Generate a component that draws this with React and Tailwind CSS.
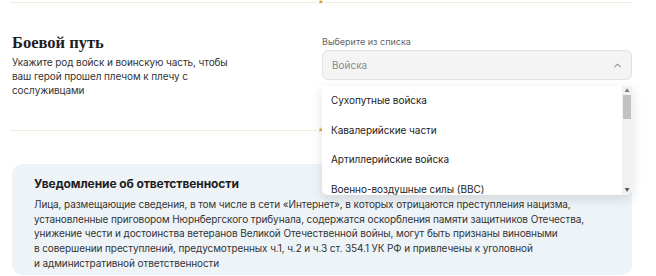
import React from 'react';
import { ChevronUp } from 'lucide-react';

const branches = [
  'Сухопутные войска',
  'Кавалерийские части',
  'Артиллерийские войска',
  'Военно-воздушные силы (ВВС)',
];

function Divider() {
  return (
    <div className="flex h-[4px] items-center">
      <div className="h-px flex-1 bg-[#f3e9dc]" />
      <span className="mx-[1px] text-[6px] leading-none text-[#d9a441]">★</span>
      <div className="h-px flex-1 bg-[#f3e9dc]" />
    </div>
  );
}

function Dropdown() {
  return (
    <div className="absolute left-[322px] top-[86px] flex h-[109px] w-[310px] overflow-hidden rounded-b-[6px] bg-white shadow-[0_4px_12px_rgba(0,0,0,0.12)]">
      <ul className="flex-1">
        {branches.map((b) => (
          <li
            key={b}
            className="flex h-[29.5px] items-center pl-[9px] text-[10px] tracking-[-0.05px] text-[#222]"
          >
            {b}
          </li>
        ))}
      </ul>
      <div className="flex w-[10px] flex-col items-center bg-[#f1f1f1]">
        <span className="mt-[1px] text-[5px] leading-[6px] text-[#777]">▲</span>
        <div className="mt-[2px] h-[24px] w-[8px] bg-[#c1c1c1]" />
        <div className="flex-1" />
        <span className="mb-[2px] text-[5px] leading-[6px] text-[#555]">▼</span>
      </div>
    </div>
  );
}

export default function App() {
  return (
    <div className="relative h-[276px] w-[656px] overflow-hidden bg-white font-['Inter',sans-serif]">
      <div className="ml-[10px] w-[622px]">
        <Divider />
      </div>

      <div className="ml-[12px] flex h-[124px] w-[620px] pt-[29px]">
        <div className="w-[310px]">
          <h2 className="font-['Liberation_Serif',serif] text-[16.5px] font-bold leading-[20px] text-[#1e1e1e]">
            Боевой путь
          </h2>
          <p className="mt-[2px] text-[10px] leading-[14px] tracking-[-0.1px] text-[#333]">
            Укажите род войск и воинскую часть, чтобы
            <br />
            ваш герой прошел плечом к плечу с
            <br />
            сослуживцами
          </p>
        </div>
        <div className="w-[310px] pt-[3px]">
          <div className="text-[9px] leading-[12px] text-[#666]">Выберите из списка</div>
          <div className="mt-[2px] flex h-[30px] items-center justify-between rounded-[6px] border border-[#e2e2e2] bg-[#f4f4f4] pl-[9px] pr-[8px]">
            <span className="text-[10px] text-[#8a8a8a]">Войска</span>
            <ChevronUp size={11} strokeWidth={2} className="text-[#555]" />
          </div>
        </div>
      </div>

      <div className="ml-[10px] w-[622px]">
        <Divider />
      </div>

      <div className="ml-[12px] mt-[32px] h-[111px] w-[620px] rounded-[10px] bg-[#eef3f8] pl-[22px] pt-[11px]">
        <h3 className="text-[12px] font-bold leading-[18px] tracking-[-0.1px] text-[#1e1e1e]">
          Уведомление об ответственности
        </h3>
        <p className="mt-[4px] whitespace-nowrap text-[10px] leading-[14.7px] tracking-[-0.1px] text-[#333]">
          Лица, размещающие сведения, в том числе в сети «Интернет», в которых отрицаются преступления нацизма,
          <br />
          установленные приговором Нюрнбергского трибунала, содержатся оскорбления памяти защитников Отечества,
          <br />
          унижение чести и достоинства ветеранов Великой Отечественной войны, могут быть признаны виновными
          <br />
          в совершении преступлений, предусмотренных ч.1, ч.2 и ч.3 ст. 354.1 УК РФ и привлечены к уголовной
          <br />
          и административной ответственности
        </p>
      </div>

      <Dropdown />
    </div>
  );
}
